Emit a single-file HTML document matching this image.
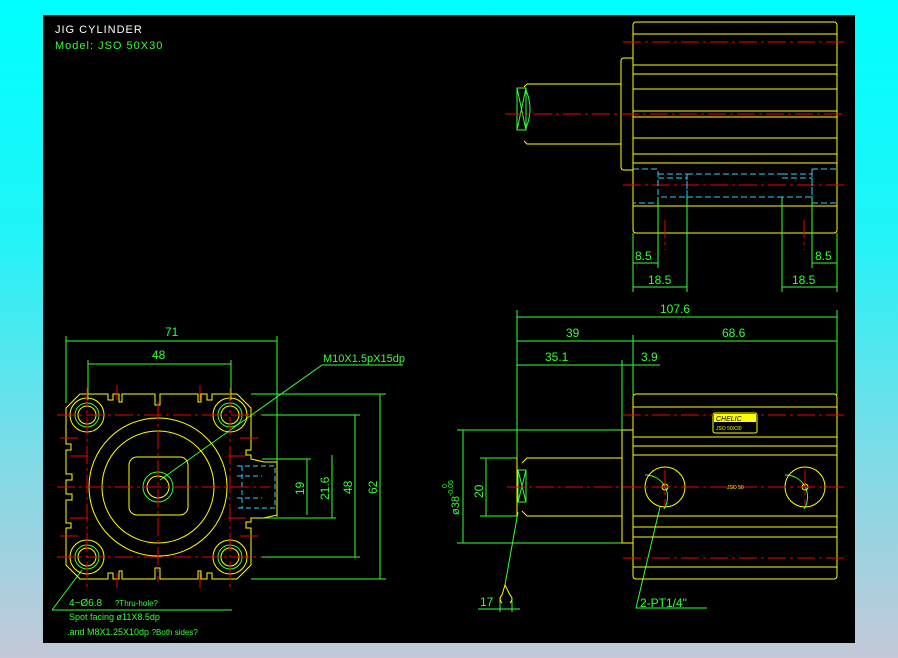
<!DOCTYPE html>
<html><head><meta charset="utf-8"><style>
html,body{margin:0;padding:0;width:898px;height:658px;overflow:hidden;background:linear-gradient(180deg,#00ffff 0%,#20f4f8 35%,#7fdbe6 70%,#c4c8d8 100%);}
svg{position:absolute;left:0;top:0}
text{font-family:"Liberation Sans",sans-serif;}
</style></head><body>
<svg width="898" height="658" viewBox="0 0 898 658">
<rect x="43" y="15" width="812" height="628" fill="#000"/>
<text x="55" y="33" fill="#fff" font-size="11" letter-spacing="1">JIG CYLINDER</text>
<text x="55" y="49" fill="#3f3" font-size="11" letter-spacing="1">Model: JSO 50X30</text>

<!-- ===== Top right view ===== -->
<g fill="none" stroke-width="1">
<g stroke="#ff0">
<rect x="633" y="22" width="204" height="211" rx="3"/>
<path d="M633 34H837M633 65H837M633 74H837M633 89H837M633 111H837M633 117H837M633 138H837M633 154H837M633 163H837M633 206H837"/>
<path d="M633 58H624Q621 58 621 61V167Q621 170 624 170H633"/>
<path d="M621 84H527L524 87M621 144H527L524 141"/>
</g>
<g stroke="#3f3"><rect x="517" y="88" width="9" height="42"/><path d="M517 88L526 130M526 88L517 130M526 90Q534 109 526 128"/></g>
<g stroke="#e00" stroke-dasharray="18 4 3 4"><path d="M623 42H845M505 114H845M623 185H845M665 220V250M804 220V250"/></g>
<g stroke="#3cf" stroke-dasharray="6 3"><path d="M633 169H658V203H633M658 174H687V197H658M687 174V197M658 178H687M782 174H812V197H782M782 178H812M812 169H837M812 203H837M812 169V203M687 174H782M687 197H782"/></g>
<g stroke="#3f3"><path d="M633 233V292M658 197V268M687 197V292M782 197V292M812 197V268M837 233V292M633 263H658M633 287H687M782 287H837M812 263H837"/></g>
</g>
<g fill="#3f3" font-size="12"><text x="635" y="260">8.5</text><text x="648" y="284">18.5</text><text x="815" y="260">8.5</text><text x="792" y="284">18.5</text></g>

<!-- ===== Bottom right view ===== -->
<g fill="none">
<g stroke="#3f3">
<path d="M517 317H837M517 341H837M517 365H660M517 310V460M633 335V395M622 360V430M837 310V395"/>
<path d="M463 430V543M457 430H622M457 543H622M486 458V516M480 458H517M480 516H517"/>
<path d="M478 609H520M500 600V612M512 600V612"/>
<path d="M518 512L505 585M660 507L636 608H707"/>
<path d="M518 470h8v32h-8zM518 470L526 502M526 470L518 502"/>
<path d="M645 475A22 22 0 0 1 664 509M785 475A22 22 0 0 1 804 509"/>
</g>
<g stroke="#ff0">
<rect x="633" y="394" width="204" height="185" rx="3"/>
<path d="M633 407H837M633 437H837M633 446H837M633 455H837M633 516H837M633 527H837M633 537H837M633 567H837"/>
<path d="M622 430H633V543H622ZM622 458H527L522 463M622 516H527L522 511M517 458V516"/>
<circle cx="665" cy="487" r="20"/><circle cx="665" cy="487" r="3"/>
<circle cx="805" cy="487" r="20"/><circle cx="805" cy="487" r="3"/>
<rect x="713" y="413" width="44" height="20" rx="2"/>
<path d="M502 595q-4 4 0 8M510 595q4 4 0 8M502 595L505 585L510 595"/>
</g>
<g stroke="#e00" stroke-dasharray="18 4 3 4"><path d="M623 415H845M507 487H845M623 558H845M665 470V505M805 470V505"/></g>
</g>
<rect x="714" y="414" width="42" height="8" fill="#ff0"/>
<text x="716" y="421" font-size="7" fill="#000" font-style="italic">CHELIC</text>
<text x="716" y="430" font-size="5" fill="#ff0">JSO 50X30</text>
<text x="727" y="489" font-size="5" fill="#ff0">JSO 50</text>
<g fill="#3f3" font-size="12">
<text x="660" y="313">107.6</text><text x="566" y="337">39</text><text x="722" y="337">68.6</text>
<text x="545" y="361">35.1</text><text x="641" y="361">3.9</text>
<text x="480" y="606">17</text><text x="640" y="607">2-PT1/4"</text>
<text transform="translate(483,498) rotate(-90)">20</text>
<text transform="translate(459,515) rotate(-90)" font-size="11">ø38<tspan font-size="7" dy="-6">-0.05</tspan></text>
<text transform="translate(447,488) rotate(-90)" font-size="7">0</text>
</g>

<!-- ===== Left end view ===== -->
<g fill="none">
<g stroke="#3f3">
<path d="M66 341H277M88 364H231M66 336V403M277 336V517M88 360V400M231 360V400"/>
<path d="M251 394H386M262 415H360M262 557H360M251 579H386M380 394V579M355 415V557M262 459H311M262 518H336M307 459V515M332 455V518"/>
<path d="M160 480L322 365H403M52 610L82 570M52 610H232"/>
<circle cx="87" cy="415" r="12"/><circle cx="230" cy="415" r="12"/><circle cx="87" cy="557" r="12"/><circle cx="230" cy="557" r="12"/>
<circle cx="158" cy="487" r="15"/>
</g>
<g stroke="#ff0">
<path d="M80 394H108V400H113V394H119V402H122V394H155V405H160V394H198V402H201V394H207V400H212V394H237L251 408V450H246V455H251V459L264 462H277V515L264 518H251V522H246V528H251V565L237 579H212V573H207V579H201V571H198V579H160V568H155V579H122V571H119V579H113V573H108V579H80L66 565V528H71V523H66V500H72V494H66V480H72V474H66V450H71V444H66V408Z"/>
<circle cx="87" cy="415" r="17"/><circle cx="230" cy="415" r="17"/><circle cx="87" cy="557" r="17"/><circle cx="230" cy="557" r="17"/>
<circle cx="87" cy="415" r="9"/><circle cx="230" cy="415" r="9"/><circle cx="87" cy="557" r="9"/><circle cx="230" cy="557" r="9"/>
<circle cx="158" cy="487" r="69"/><circle cx="158" cy="487" r="56"/><circle cx="158" cy="487" r="11"/>
<rect x="129" y="457" width="59" height="58" rx="8"/>
</g>
<g stroke="#3cf" stroke-dasharray="5 3"><path d="M237 466H275V508H237M242 466V508M237 476H262M237 498H262"/></g>
<g stroke="#e00" stroke-dasharray="18 4 3 4">
<path d="M57 487H270M158 402V582M57 415H262M57 557H262M87 388V590M230 388V590M70 456H90M70 518H90M228 456H248M228 518H248"/>
</g>
<g stroke="#e00"><path d="M117 385V400M200 385V400M117 573V588M200 573V588M60 438H78M60 536H78M240 438H258M240 536H258"/></g>
</g>
<g fill="#3f3" font-size="12">
<text x="165" y="336">71</text><text x="152" y="359">48</text>
<text x="323" y="362" font-size="11">M10X1.5pX15dp</text>
<text transform="translate(304,495) rotate(-90)">19</text>
<text transform="translate(329,500) rotate(-90)">21.6</text>
<text transform="translate(352,494) rotate(-90)">48</text>
<text transform="translate(377,494) rotate(-90)">62</text>
<text x="69" y="606" font-size="10">4−Ø6.8 <tspan font-size="8" dx="10">?Thru-hole?</tspan></text>
<text x="69" y="620" font-size="9">Spot facing  ø11X8.5dp</text>
<text x="67" y="635" font-size="9">.and M8X1.25X10dp <tspan font-size="8">?Both sides?</tspan></text>
</g>
</svg>
</body></html>
